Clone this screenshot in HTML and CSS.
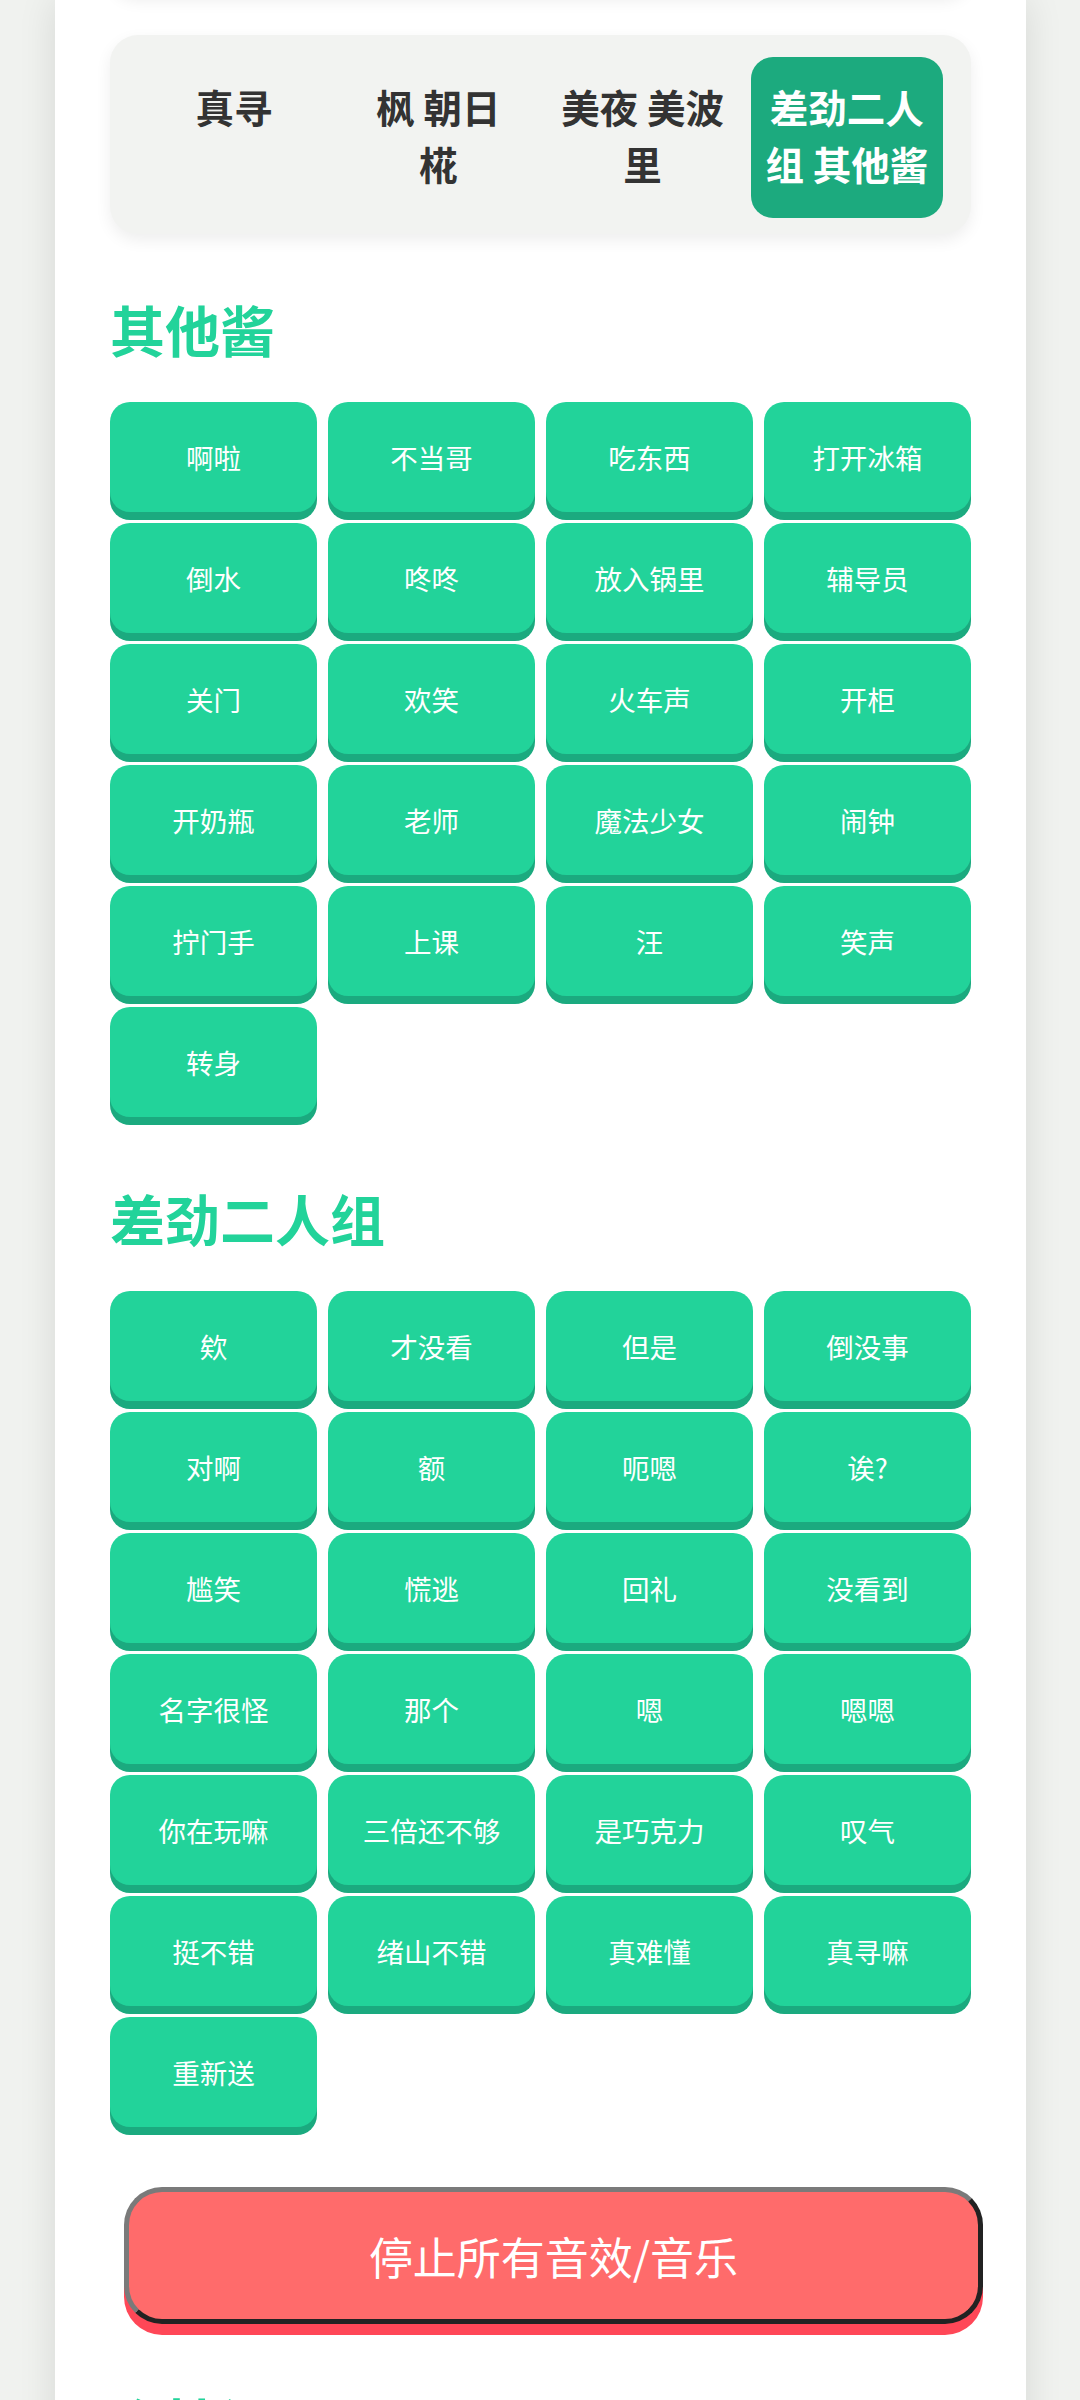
FILE: index.html
```html
<!DOCTYPE html>
<html lang="zh-CN">
<head>
<meta charset="utf-8">
<title>音效板</title>
<link rel="stylesheet" href="styles.css">
</head>
<body>
<div class="page">
  <div class="prev-card"></div>

  <nav class="tabs">
    <div class="tab">真寻</div>
    <div class="tab">枫 朝日 椛</div>
    <div class="tab">美夜 美波里</div>
    <div class="tab active">差劲二人组 其他酱</div>
  </nav>

  <section class="section">
    <h2 class="section-title">其他酱</h2>
    <div class="grid">
      <button class="sound">啊啦</button>
      <button class="sound">不当哥</button>
      <button class="sound">吃东西</button>
      <button class="sound">打开冰箱</button>
      <button class="sound">倒水</button>
      <button class="sound">咚咚</button>
      <button class="sound">放入锅里</button>
      <button class="sound">辅导员</button>
      <button class="sound">关门</button>
      <button class="sound">欢笑</button>
      <button class="sound">火车声</button>
      <button class="sound">开柜</button>
      <button class="sound">开奶瓶</button>
      <button class="sound">老师</button>
      <button class="sound">魔法少女</button>
      <button class="sound">闹钟</button>
      <button class="sound">拧门手</button>
      <button class="sound">上课</button>
      <button class="sound">汪</button>
      <button class="sound">笑声</button>
      <button class="sound">转身</button>
    </div>
  </section>

  <section class="section">
    <h2 class="section-title">差劲二人组</h2>
    <div class="grid">
      <button class="sound">欸</button>
      <button class="sound">才没看</button>
      <button class="sound">但是</button>
      <button class="sound">倒没事</button>
      <button class="sound">对啊</button>
      <button class="sound">额</button>
      <button class="sound">呃嗯</button>
      <button class="sound">诶?</button>
      <button class="sound">尴笑</button>
      <button class="sound">慌逃</button>
      <button class="sound">回礼</button>
      <button class="sound">没看到</button>
      <button class="sound">名字很怪</button>
      <button class="sound">那个</button>
      <button class="sound">嗯</button>
      <button class="sound">嗯嗯</button>
      <button class="sound">你在玩嘛</button>
      <button class="sound">三倍还不够</button>
      <button class="sound">是巧克力</button>
      <button class="sound">叹气</button>
      <button class="sound">挺不错</button>
      <button class="sound">绪山不错</button>
      <button class="sound">真难懂</button>
      <button class="sound">真寻嘛</button>
      <button class="sound">重新送</button>
    </div>
  </section>

  <button class="stop-all">停止所有音效/音乐</button>

  <section class="section settings">
    <h2 class="section-title">个性设置</h2>
  </section>
</div>
</body>
</html>
```

FILE: styles.css
```css
* {
  box-sizing: border-box;
}

html, body {
  margin: 0;
  padding: 0;
}

body {
  background: #f0f2ef;
  font-family: "Noto Sans CJK SC", "Noto Sans", sans-serif;
  color: #333;
}

.page {
  display: flow-root;
  margin: 0 54px 0 55px;
  padding: 0 55px 200px;
  background: #ffffff;
  min-height: 2600px;
  box-shadow: 0 0 36px rgba(0, 0, 0, 0.11);
}

.prev-card {
  height: 60px;
  margin-top: -65px;
  background: #ffffff;
  border-radius: 27px;
  box-shadow: 0 5px 16px rgba(0, 0, 0, 0.08);
}

.tabs {
  display: flex;
  gap: 12px;
  margin-top: 40px;
  padding: 22px 28px 16px;
  background: #f2f3f1;
  border-radius: 28px;
  box-shadow: 0 6px 16px rgba(0, 0, 0, 0.07);
}

.tab {
  flex: 1 1 0;
  min-width: 0;
  padding: 21px 12px 27px;
  border-radius: 22px;
  text-align: center;
  font-size: 38.5px;
  line-height: 56.5px;
  font-weight: 700;
  color: #333333;
}

.tab.active {
  background: #1caa7e;
  color: #ffffff;
}

.section-title {
  margin: 67px 0 41px;
  font-size: 55px;
  line-height: 66px;
  font-weight: 700;
  color: #22d39a;
}

.tabs + .section .section-title {
  margin-top: 61px;
}

.grid {
  display: grid;
  grid-template-columns: repeat(4, 1fr);
  gap: 11px;
}

.sound {
  display: flex;
  align-items: center;
  justify-content: center;
  height: 110px;
  margin: 0;
  padding: 0 6px;
  border: none;
  border-radius: 20px;
  background: #22d39a;
  box-shadow: 0 8px 0 #1baa7f;
  color: #ffffff;
  font-family: "Noto Sans CJK SC", "Noto Sans", sans-serif;
  font-size: 27.5px;
  font-weight: 400;
  white-space: nowrap;
}

.stop-all {
  display: block;
  width: calc(100% - 2px);
  height: 137px;
  margin: 60px 0 0 14px;
  padding: 0;
  border: 5px solid;
  border-color: #7a7a7a #222222 #222222 #7a7a7a;
  border-radius: 38px;
  background: #ff6b6b;
  box-shadow: 0 11px 0 #ff4757;
  color: #ffffff;
  font-family: "Noto Sans CJK SC", "Noto Sans", sans-serif;
  font-size: 44px;
  font-weight: 400;
}

.settings .section-title {
  margin-top: 64px;
}
```
